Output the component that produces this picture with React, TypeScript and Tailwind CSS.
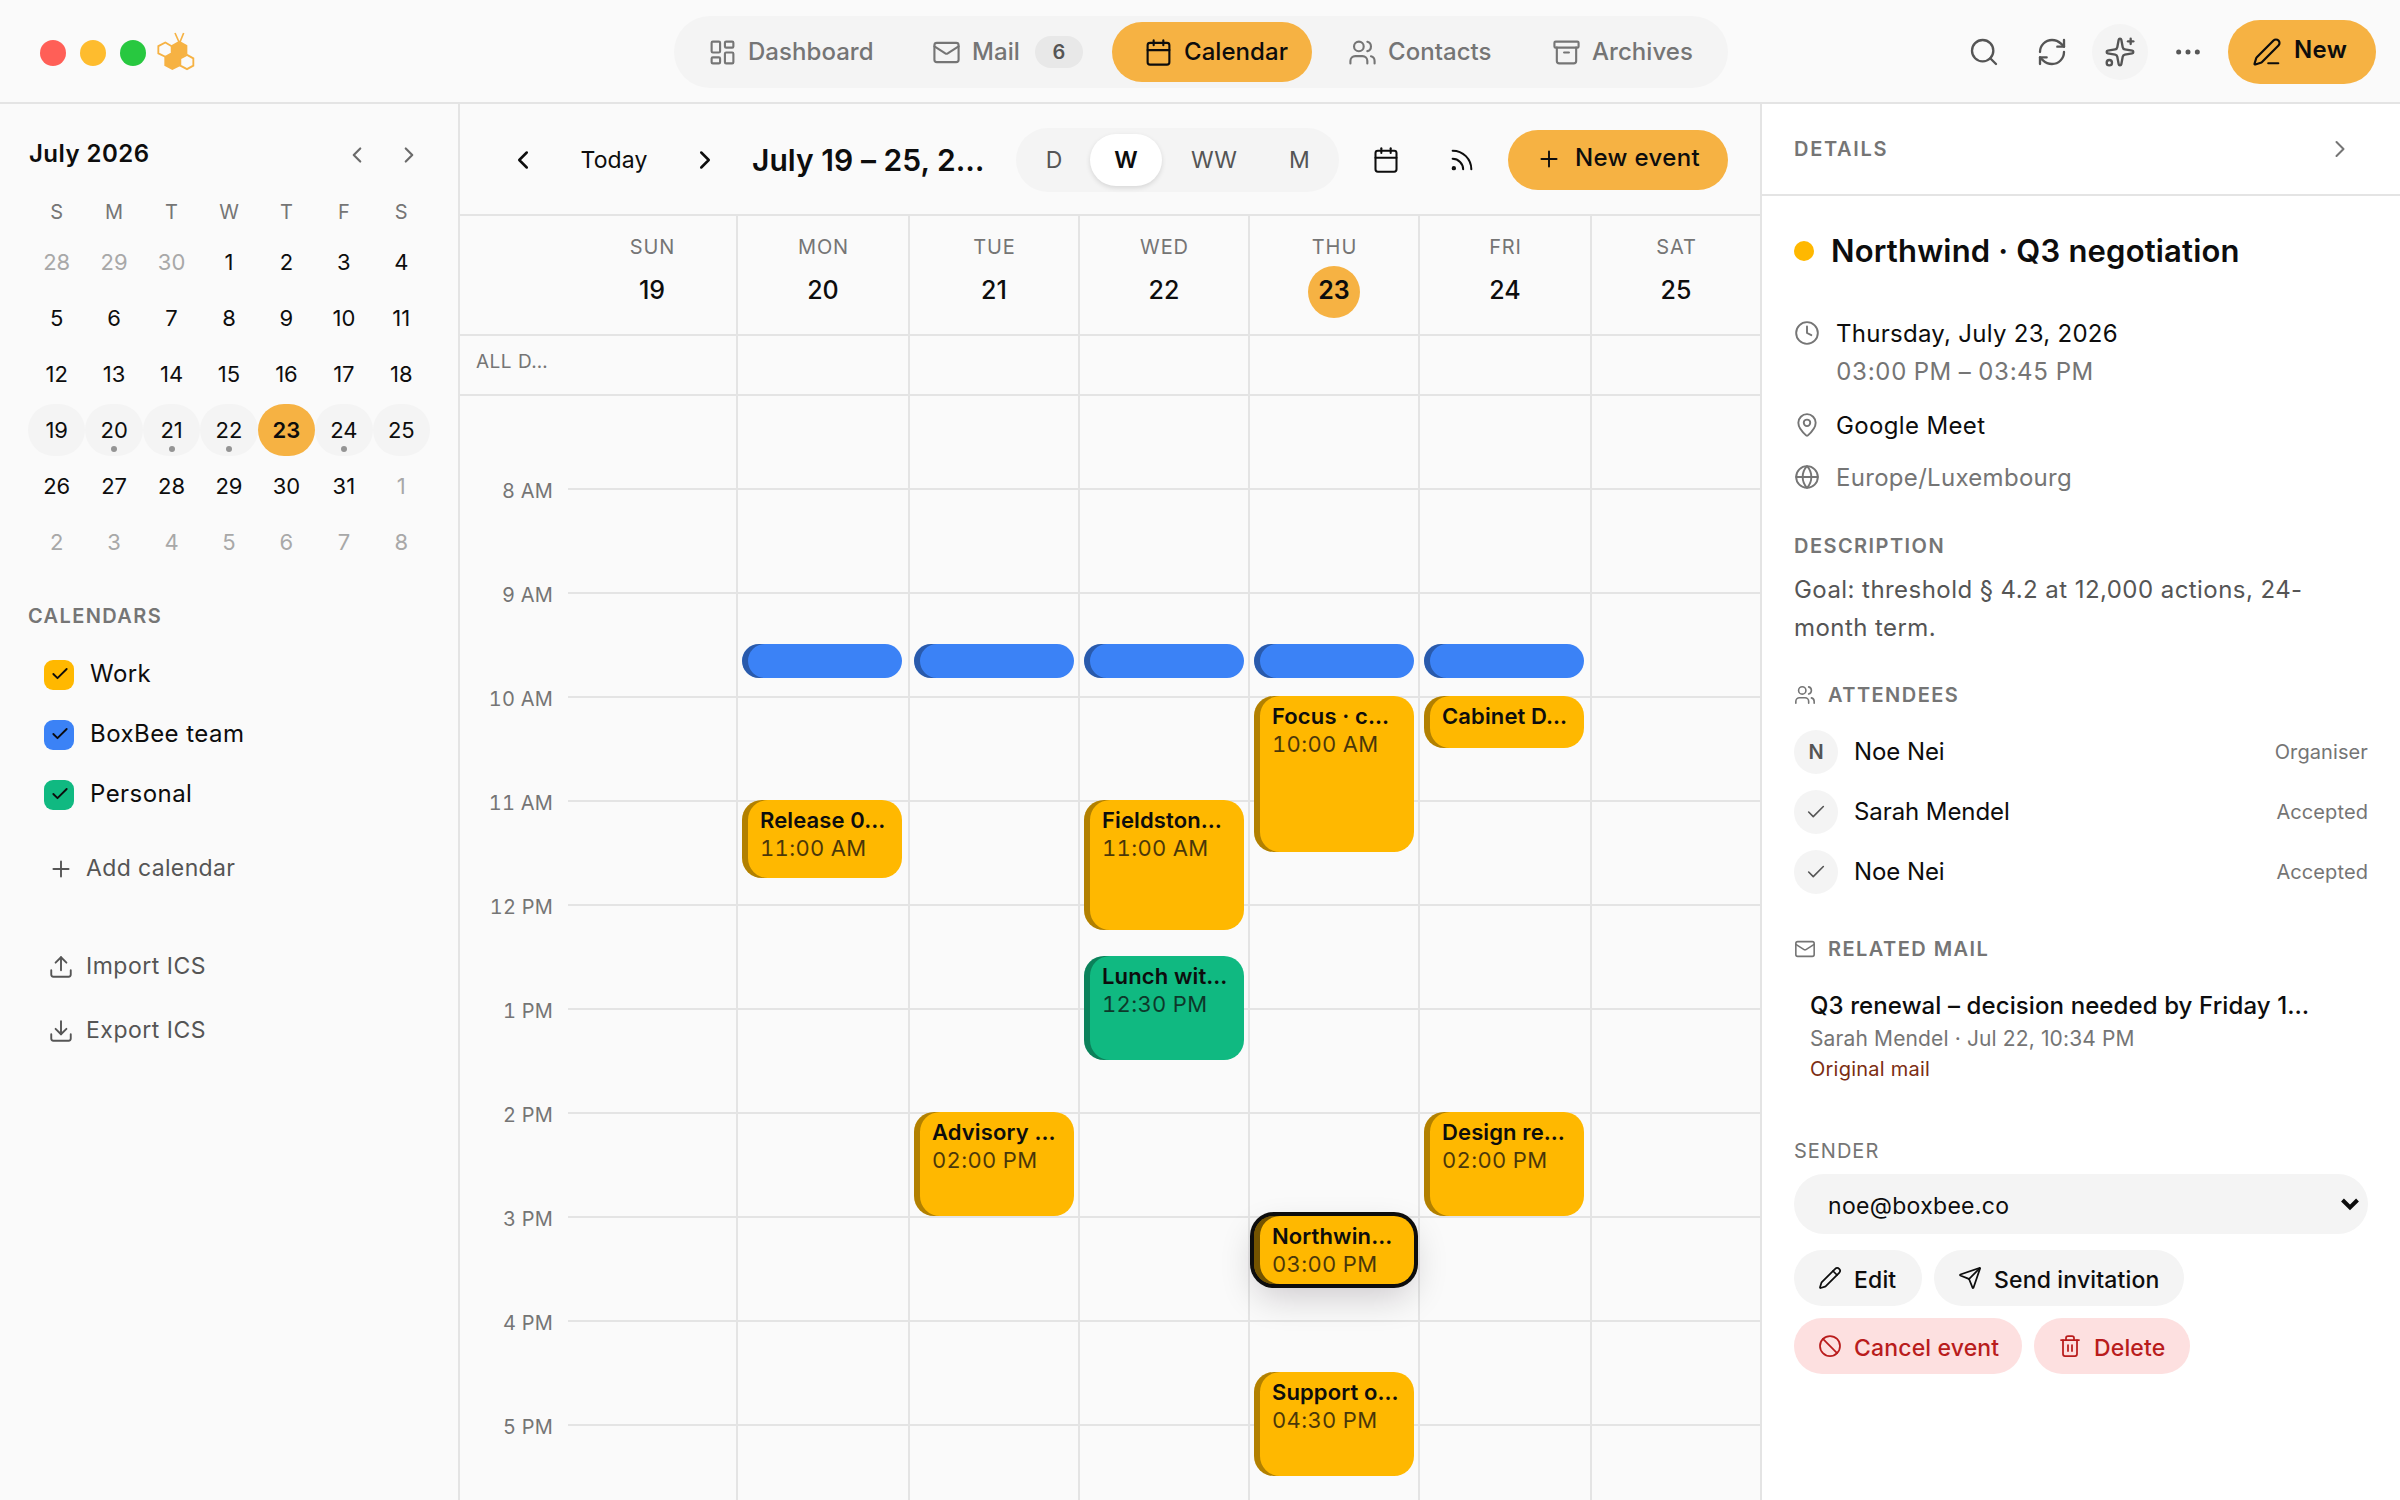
import type { ReactNode } from "react";
import {
  Archive,
  Ban,
  Calendar,
  Check,
  ChevronLeft,
  ChevronRight,
  Clock,
  Download,
  Ellipsis,
  Globe,
  LayoutDashboard,
  Mail,
  MapPin,
  PenLine,
  Pencil,
  Plus,
  RefreshCw,
  Rss,
  Search,
  Send,
  Sparkles,
  Trash2,
  Upload,
  Users,
} from "lucide-react";

const SW = 1.75;

function Logo() {
  return (
    <svg width="38" height="39" viewBox="470 94 114 117" fill="none" aria-hidden="true">
      <path d="M524 97 536 124M550 97 539 124" stroke="#f6b243" strokeWidth="5" />
      <path d="M537 120 561 134V160L540 172V196L516 208 492 195V170L513 158V134Z" fill="#f6b243" />
      <path d="M495 125.500 514 136.500V158L495 168.500 474 158V136.500Z" fill="#fafafa" stroke="#f6b243" strokeWidth="5.500" />
      <path d="M560 162.500 579 173V195L560 205.500 540 195V173Z" fill="#fafafa" stroke="#f6b243" strokeWidth="5.500" />
    </svg>
  );
}

function Tab({ icon, label, box, active, badge }: { icon: ReactNode; label: string; box: string; active?: boolean; badge?: string }) {
  return (
    <div
      className={`flex h-[60px] shrink-0 items-center gap-[11px] rounded-full text-2xl font-medium tracking-[0.05px] whitespace-nowrap ${box} ${
        active ? "bg-[#f6b243] text-[#0d0d0d]" : "text-[#757575]"
      }`}
    >
      {icon}
      <span>{label}</span>
      {badge && (
        <span className="ml-1 flex h-8 w-12 items-center justify-center rounded-full bg-[#e8e8e8] text-xl font-semibold text-[#555]">
          {badge}
        </span>
      )}
    </div>
  );
}

function TopBar() {
  return (
    <header className="flex h-[104px] shrink-0 border-b-2 border-[#e4e4e4]">
      <div className="flex w-[674px] items-center gap-3.5 pl-10">
        <span className="mt-1 size-[26px] rounded-full bg-[#ff5f57]" />
        <span className="mt-1 size-[26px] rounded-full bg-[#febc2e]" />
        <span className="mt-1 size-[26px] rounded-full bg-[#28c840]" />
        <span className="-ml-[3px]">
          <Logo />
        </span>
      </div>
      <nav className="mt-4 flex h-[72px] w-[1054px] items-center rounded-full bg-[#f4f4f4] px-1.5">
        <Tab icon={<LayoutDashboard size={29} strokeWidth={SW} />} label="Dashboard" box="w-[220px] pl-7" />
        <Tab icon={<Mail size={29} strokeWidth={SW} />} label="Mail" box="w-[212px] pl-8" badge="6" />
        <Tab icon={<Calendar size={29} strokeWidth={SW} />} label="Calendar" box="w-[200px] pl-8" active />
        <Tab icon={<Users size={29} strokeWidth={SW} />} label="Contacts" box="ml-1 w-[204px] pl-8" />
        <Tab icon={<Archive size={29} strokeWidth={SW} />} label="Archives" box="w-[202px] pl-8" />
      </nav>
      <div className="ml-auto flex h-[104px] items-center gap-3 pr-6 text-[#555]">
        <span className="flex size-14 items-center justify-center">
          <Search size={32} strokeWidth={SW} />
        </span>
        <span className="flex size-14 items-center justify-center">
          <RefreshCw size={32} strokeWidth={SW} />
        </span>
        <span className="flex size-14 items-center justify-center rounded-full bg-[#f4f4f4]">
          <Sparkles size={32} strokeWidth={SW} />
        </span>
        <span className="flex size-14 items-center justify-center">
          <Ellipsis size={32} strokeWidth={SW} />
        </span>
        <button className="flex h-16 w-[148px] items-center gap-3 rounded-full bg-[#f6b243] pl-6 text-2xl font-semibold tracking-[0.3px] text-[#0d0d0d]">
          <PenLine size={30} strokeWidth={SW} className="-mt-px" />
          <span className="-mt-1">New</span>
        </button>
      </div>
    </header>
  );
}

const weeks = [
  [28, 29, 30, 1, 2, 3, 4],
  [5, 6, 7, 8, 9, 10, 11],
  [12, 13, 14, 15, 16, 17, 18],
  [19, 20, 21, 22, 23, 24, 25],
  [26, 27, 28, 29, 30, 31, 1],
  [2, 3, 4, 5, 6, 7, 8],
];
const dotted = [20, 21, 22, 24];

function MiniDay({ day, week, index }: { day: number; week: number; index: number }) {
  const outside = (week === 0 && day > 20) || week === 5 || (week === 4 && index === 6);
  const current = week === 3;
  const today = current && day === 23;
  const tone = today
    ? "bg-[#f6b243] font-semibold text-[#0d0d0d]"
    : current
      ? "bg-[#f4f4f4] text-[#0d0d0d]"
      : outside
        ? "text-[#a8a8a8]"
        : "text-[#0d0d0d]";
  return (
    <div className={`relative flex h-[52px] items-center justify-center rounded-full text-[22px] ${tone}`}>
      {day}
      {current && dotted.includes(day) && <span className="absolute bottom-1 left-1/2 size-1.5 -translate-x-1/2 rounded-full bg-[#949494]" />}
    </div>
  );
}

function Sidebar() {
  const calendars = [
    ["Work", "bg-[#ffb800]"],
    ["BoxBee team", "bg-[#3b82f6]"],
    ["Personal", "bg-[#10b981]"],
  ];
  return (
    <aside className="flex w-[460px] shrink-0 flex-col border-r-2 border-[#e4e4e4] px-7 pt-3">
      <div className="flex h-[76px] items-center">
        <span className="ml-px flex-1 text-2xl font-semibold tracking-[0.46px]">July 2026</span>
        <div className="-mr-px flex gap-2 pt-0.5 text-[#6b6b6b]">
          <span className="flex size-11 items-center justify-center">
            <ChevronLeft size={26} strokeWidth={2} />
          </span>
          <span className="flex size-11 items-center justify-center">
            <ChevronRight size={26} strokeWidth={2} />
          </span>
        </div>
      </div>
      <div className="mb-1 grid h-10 grid-cols-7 items-center text-center text-xl text-[#757575]">
        {"SMTWTFS".split("").map((d, i) => (
          <span key={i}>{d}</span>
        ))}
      </div>
      <div className="grid grid-cols-7 gap-y-1">
        {weeks.flatMap((w, wi) => w.map((d, i) => <MiniDay key={`${wi}-${i}`} day={d} week={wi} index={i} />))}
      </div>
      <div className="mt-8 mb-[13px] flex h-8 items-center text-xl font-semibold tracking-[1.38px] text-[#757575]">CALENDARS</div>
      {calendars.map(([name, color]) => (
        <div key={name} className="flex h-[60px] items-center gap-4 pl-4">
          <span className={`flex size-[30px] items-center justify-center rounded-[9px] pb-0.5 pl-px ${color}`}>
            <Check size={20} strokeWidth={2.25} />
          </span>
          <span className="-mt-0.5 text-2xl tracking-[0.45px]">{name}</span>
        </div>
      ))}
      <div className="mt-[15px] flex h-14 items-center gap-3 pl-5 text-[23px] tracking-[0.36px] text-[#555]">
        <Plus size={26} strokeWidth={SW} className="mt-px" />
        <span>Add calendar</span>
      </div>
      <div className="mt-[42px] flex flex-col gap-2 text-[23px] tracking-[0.5px] text-[#555]">
        <div className="flex h-14 items-center gap-3 pl-5">
          <Upload size={26} strokeWidth={SW} className="mt-px" />
          <span>Import ICS</span>
        </div>
        <div className="flex h-14 items-center gap-3 pl-5">
          <Download size={26} strokeWidth={SW} className="mt-px" />
          <span>Export ICS</span>
        </div>
      </div>
    </aside>
  );
}

function Toolbar() {
  return (
    <div className="flex h-28 shrink-0 items-center border-b-2 border-[#e4e4e4] pt-0.5">
      <div className="flex w-[556px] items-center">
        <span className="ml-[31px] flex w-16 justify-center">
          <ChevronLeft size={30} strokeWidth={2} />
        </span>
        <span className="w-[118px] text-center text-[23px] leading-8 tracking-[0.1px]">Today</span>
        <span className="flex w-16 justify-center">
          <ChevronRight size={30} strokeWidth={2} />
        </span>
        <span className="ml-[15px] text-[30px] leading-10 font-semibold tracking-[0.05px] whitespace-nowrap">July 19 – 25, 2…</span>
      </div>
      <div className="flex h-16 w-[323px] items-center rounded-full bg-[#f4f4f4] pl-1.5 text-[23px] text-[#555]">
        <span className="w-16 text-center">D</span>
        <span className="mx-1 flex h-[52px] w-[72px] items-center justify-center rounded-full bg-white font-semibold text-[#0d0d0d] shadow-[0_2px_5px_rgba(0,0,0,0.12)]">
          W
        </span>
        <span className="w-24 text-center">WW</span>
        <span className="ml-1 w-[67px] text-center">M</span>
      </div>
      <span className="ml-[15px] flex w-16 justify-center">
        <Calendar size={28} strokeWidth={SW} />
      </span>
      <span className="ml-3 flex w-16 justify-center">
        <Rss size={28} strokeWidth={SW} />
      </span>
      <button className="ml-3.5 flex h-[60px] w-[220px] items-center gap-[13px] rounded-full bg-[#f6b243] pl-7 text-2xl font-medium tracking-[0.35px]">
        <Plus size={26} strokeWidth={SW} className="-mt-0.5" />
        <span className="-mt-1">New event</span>
      </button>
    </div>
  );
}

type Ev = { day: number; top: number; height: number; color: string; title?: string; time?: string; selected?: boolean };
const Y = "bg-[#ffb800]";
const B = "bg-[#3b82f6]";
const G = "bg-[#10b981]";
// Offsets are measured from the top of the scrolled time grid; one hour is 104px.
const events: Ev[] = [
  { day: 1, top: 248, height: 34, color: B },
  { day: 2, top: 248, height: 34, color: B },
  { day: 3, top: 248, height: 34, color: B },
  { day: 4, top: 248, height: 34, color: B },
  { day: 5, top: 248, height: 34, color: B },
  { day: 1, top: 404, height: 78, color: Y, title: "Release 0…", time: "11:00 AM" },
  { day: 2, top: 716, height: 104, color: Y, title: "Advisory …", time: "02:00 PM" },
  { day: 3, top: 404, height: 130, color: Y, title: "Fieldston…", time: "11:00 AM" },
  { day: 3, top: 560, height: 104, color: G, title: "Lunch wit…", time: "12:30 PM" },
  { day: 4, top: 300, height: 156, color: Y, title: "Focus · c…", time: "10:00 AM" },
  { day: 4, top: 820, height: 68, color: Y, title: "Northwin…", time: "03:00 PM", selected: true },
  { day: 4, top: 976, height: 104, color: Y, title: "Support o…", time: "04:30 PM" },
  { day: 5, top: 300, height: 52, color: Y, title: "Cabinet D…" },
  { day: 5, top: 716, height: 104, color: Y, title: "Design re…", time: "02:00 PM" },
];

function EventCard({ ev }: { ev: Ev }) {
  return (
    <div
      className={`absolute left-1 w-40 overflow-hidden rounded-[20px] pt-1.5 pl-[18px] text-[22px] leading-7 whitespace-nowrap ${ev.color} ${
        ev.selected
          ? "z-10 shadow-[inset_6px_0_0_rgba(0,0,0,0.55),0_0_0_4px_#0d0d0d,0_14px_36px_-2px_rgba(20,0,20,0.2)]"
          : "shadow-[inset_6px_0_0_rgba(0,0,0,0.3)]"
      }`}
      style={{ top: ev.top, height: ev.height }}
    >
      {ev.title && <div className="font-semibold tracking-[0.12px]">{ev.title}</div>}
      {ev.time && <div className="tracking-[0.32px] tabular-nums opacity-75">{ev.time}</div>}
    </div>
  );
}

const days = ["SUN", "MON", "TUE", "WED", "THU", "FRI", "SAT"];
const hours = ["8 AM", "9 AM", "10 AM", "11 AM", "12 PM", "1 PM", "2 PM", "3 PM", "4 PM", "5 PM"];
const cols = "grid grid-cols-[170px_172px_170px_170px_170px_172px_168px]";

function Week() {
  return (
    <>
      <div className="flex h-[120px] shrink-0 border-b-2 border-[#e4e4e4] pl-[108px]">
        <div className={cols}>
          {days.map((d, i) => (
            <div key={d} className={`flex flex-col items-center ${i < 6 ? "border-r-2 border-[#e4e4e4]" : ""}`}>
              <span className="mt-4 h-[30px] pl-px text-xl leading-[30px] tracking-[0.9px] text-[#757575]">{d}</span>
              <span
                className={`mt-1 flex size-[52px] items-center justify-center rounded-full pb-[3px] text-[25px] ${
                  i === 4 ? "bg-[#f6b243] font-semibold" : "font-medium"
                }`}
              >
                {19 + i}
              </span>
            </div>
          ))}
        </div>
      </div>
      <div className="flex h-[60px] shrink-0 border-b-2 border-[#e4e4e4]">
        <div className="w-[108px] pt-3 pl-4 text-[19px] leading-7 tracking-[0.5px] text-[#757575]">ALL D…</div>
        <div className={cols}>
          {days.map((d, i) => (
            <div key={d} className={i < 6 ? "border-r-2 border-[#e4e4e4]" : ""} />
          ))}
        </div>
      </div>
      <div className="flex min-h-0 flex-1 overflow-hidden">
        <div className="w-[108px] shrink-0 pt-[42px] pr-[15px] text-right text-xl tracking-[0.2px] text-[#757575] tabular-nums">
          {hours.map((h) => (
            <div key={h} className="flex h-[104px] items-start justify-end pt-[39px] leading-[28px]">
              {h}
            </div>
          ))}
        </div>
        <div className={`${cols} bg-[repeating-linear-gradient(to_bottom,#e4e4e4_0,#e4e4e4_2px,transparent_2px,transparent_104px)] bg-[position:0_92px] bg-no-repeat`}>
          {days.map((d, i) => (
            <div key={d} className={`relative ${i < 6 ? "border-r-2 border-[#e4e4e4]" : ""}`}>
              {events
                .filter((e) => e.day === i)
                .map((e) => (
                  <EventCard key={e.top} ev={e} />
                ))}
            </div>
          ))}
        </div>
      </div>
    </>
  );
}

function SectionLabel({ children, className = "" }: { children: ReactNode; className?: string }) {
  return <div className={`flex h-[30px] items-center text-xl font-semibold tracking-[1.45px] text-[#757575] ${className}`}>{children}</div>;
}

function Attendee({ avatar, name, status }: { avatar: ReactNode; name: string; status: string }) {
  return (
    <div className="flex h-[60px] items-center">
      <span className="flex size-11 items-center justify-center rounded-full bg-[#f4f4f4] text-xl font-semibold text-[#555]">{avatar}</span>
      <span className="ml-4 flex-1 text-2xl tracking-[-0.08px]">{name}</span>
      <span className="text-xl tracking-[0.1px] text-[#757575]">{status}</span>
    </div>
  );
}

function Action({ icon, label, box }: { icon: ReactNode; label: string; box: string }) {
  return (
    <button className={`flex h-14 items-center gap-3 rounded-full pl-6 text-[23px] font-medium tracking-[0.15px] whitespace-nowrap ${box}`}>
      {icon}
      <span className="mt-1">{label}</span>
    </button>
  );
}

function Details() {
  return (
    <aside className="flex flex-1 flex-col border-l-2 border-[#e4e4e4] bg-white">
      <div className="flex h-[92px] shrink-0 items-center border-b-2 border-[#e4e4e4] pl-8 text-xl font-semibold tracking-[1.7px] text-[#757575]">
        <span className="flex-1">DETAILS</span>
        <ChevronRight size={28} strokeWidth={SW} className="mr-[46px]" />
      </div>
      <div className="px-8 pt-[35px]">
        <div className="flex h-10 items-center">
          <span className="size-5 rounded-full bg-[#ffb800]" />
          <span className="ml-[17px] text-[31px] font-semibold tracking-[0.18px]">Northwind · Q3 negotiation</span>
        </div>
        <div className="mt-11 flex gap-4 text-2xl leading-[38px]">
          <Clock size={26} strokeWidth={SW} className="mt-[5px] text-[#757575]" />
          <div>
            <div className="tracking-[0.28px]">Thursday, July 23, 2026</div>
            <div className="tracking-[0.45px] text-[#757575] tabular-nums">03:00 PM – 03:45 PM</div>
          </div>
        </div>
        <div className="mt-4 flex gap-4 text-2xl leading-[38px] tracking-[0.36px]">
          <MapPin size={26} strokeWidth={SW} className="mt-[5px] text-[#757575]" />
          Google Meet
        </div>
        <div className="mt-3.5 flex gap-4 text-2xl leading-[38px] tracking-[0.3px] text-[#757575]">
          <Globe size={26} strokeWidth={SW} className="mt-[5px]" />
          Europe/Luxembourg
        </div>
        <SectionLabel className="mt-[34px]">DESCRIPTION</SectionLabel>
        <p className="mt-2.5 text-2xl leading-[38px] tracking-[0.44px] text-[#555]">
          Goal: threshold § 4.2 at 12,000 actions, 24-
          <br />
          month term.
        </p>
        <SectionLabel className="mt-[33px] gap-3">
          <Users size={22} strokeWidth={SW} />
          ATTENDEES
        </SectionLabel>
        <div className="mt-3">
          <Attendee avatar="N" name="Noe Nei" status="Organiser" />
          <Attendee avatar={<Check size={22} strokeWidth={SW} />} name="Sarah Mendel" status="Accepted" />
          <Attendee avatar={<Check size={22} strokeWidth={SW} />} name="Noe Nei" status="Accepted" />
        </div>
        <SectionLabel className="mt-8 gap-3">
          <Mail size={22} strokeWidth={SW} />
          RELATED MAIL
        </SectionLabel>
        <div className="mt-[25px] pl-4 whitespace-nowrap">
          <div className="text-2xl leading-[34px] font-medium tracking-[0.1px]">Q3 renewal – decision needed by Friday 1…</div>
          <div className="text-[21px] leading-[31px] tracking-[0.13px] text-[#757575]">Sarah Mendel · Jul 22, 10:34 PM</div>
          <div className="text-xl leading-[30px] tracking-[0.23px] text-[#7c2d12]">Original mail</div>
        </div>
        <div className="mt-[52px] text-xl leading-[30px] tracking-[1px] text-[#757575]">SENDER</div>
        <div className="mt-2 flex h-[60px] items-center rounded-full bg-[#f4f4f4] pr-2 pl-[34px] text-[23px] tracking-[0.3px]">
          <span className="mt-1 flex-1">noe@boxbee.co</span>
          <svg width="20" height="14" viewBox="0 0 20 14" fill="none" stroke="#0d0d0d" strokeWidth="4" aria-hidden="true">
            <path d="M2.500 3 10 10.500 17.500 3" />
          </svg>
        </div>
        <div className="mt-4 flex gap-3">
          <Action icon={<Pencil size={24} strokeWidth={SW} />} label="Edit" box="w-32 bg-[#f4f4f4]" />
          <Action icon={<Send size={24} strokeWidth={SW} />} label="Send invitation" box="w-[250px] bg-[#f4f4f4]" />
        </div>
        <div className="mt-3 flex gap-3 text-[#b91c1c]">
          <Action icon={<Ban size={24} strokeWidth={SW} />} label="Cancel event" box="w-[228px] bg-[#fde0e0]" />
          <Action icon={<Trash2 size={24} strokeWidth={SW} />} label="Delete" box="w-[156px] bg-[#fde0e0]" />
        </div>
      </div>
    </aside>
  );
}

export default function App() {
  return (
    <div className="flex h-[1500px] w-[2400px] flex-col overflow-hidden bg-[#fafafa] font-['Inter',sans-serif] text-[#0d0d0d]">
      <TopBar />
      <div className="flex min-h-0 flex-1">
        <Sidebar />
        <main className="flex w-[1300px] shrink-0 flex-col">
          <Toolbar />
          <Week />
        </main>
        <Details />
      </div>
    </div>
  );
}
